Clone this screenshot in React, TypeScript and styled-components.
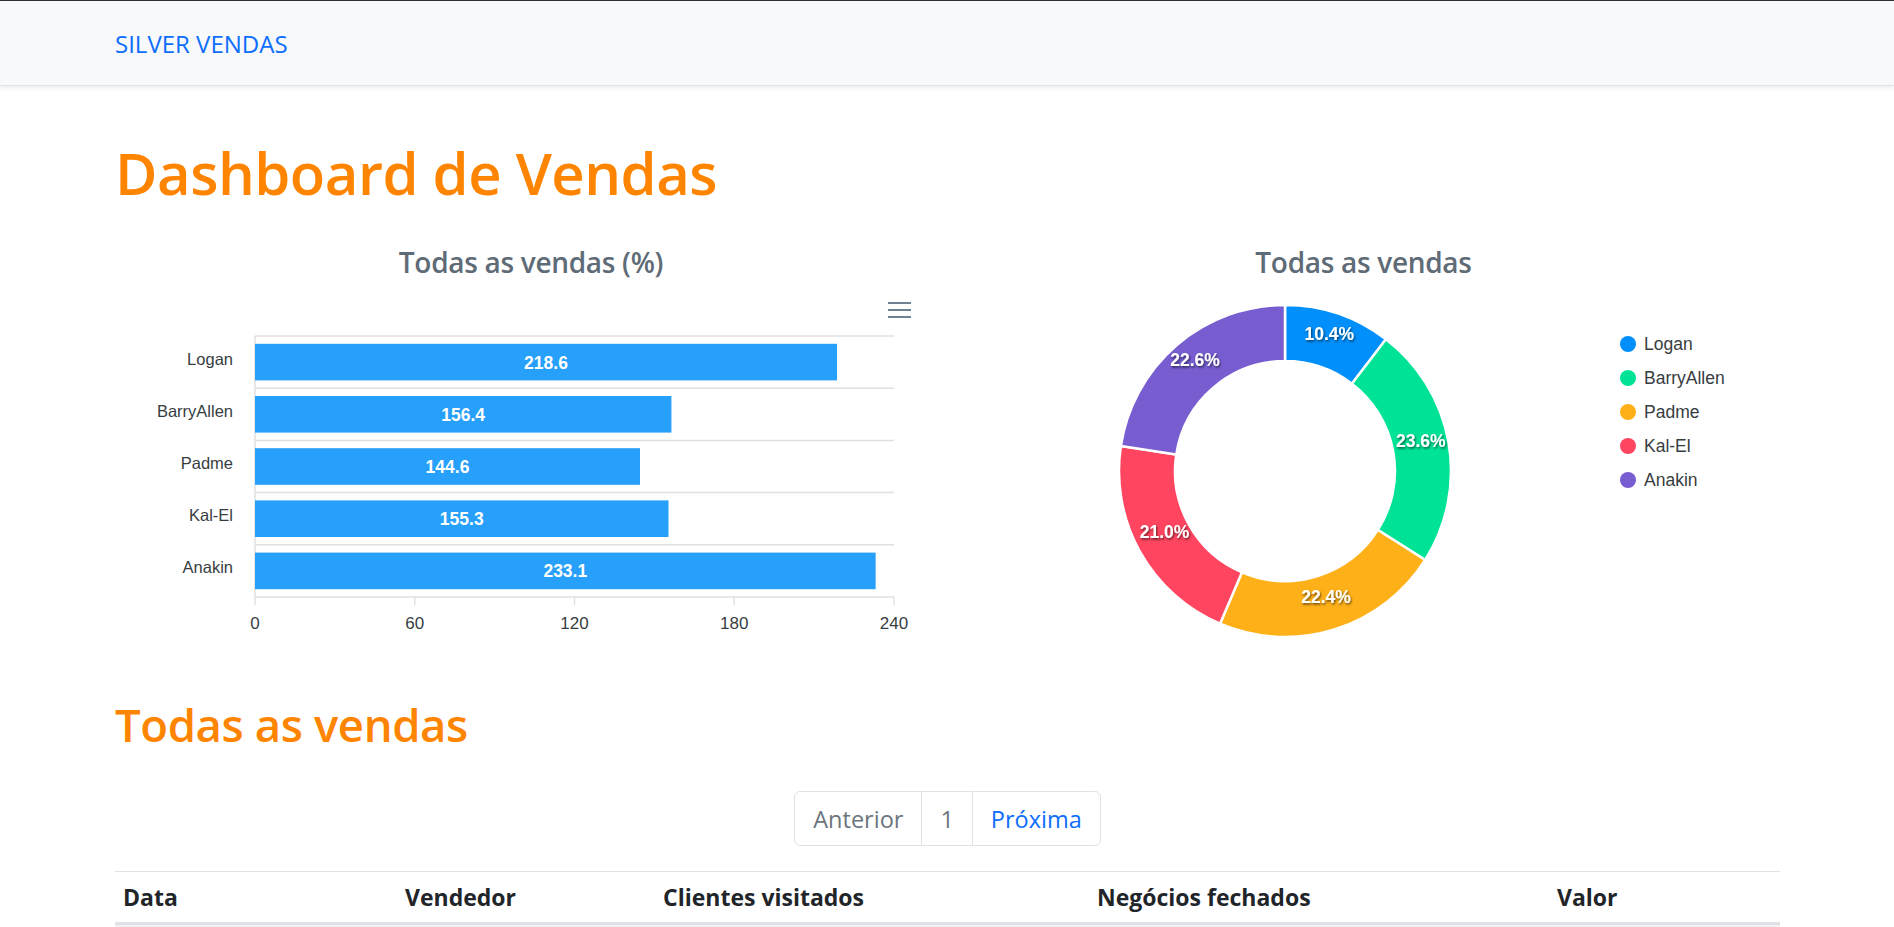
import React from "react";
import styled, { createGlobalStyle } from "styled-components";

const GlobalStyle = createGlobalStyle`
  html, body {
    margin: 0;
    padding: 0;
    overflow: hidden;
    background: #ffffff;
  }
  body {
    font-family: "Open Sans", "Noto Sans", sans-serif;
    color: #212529;
  }
`;

const NavBar = styled.nav`
  height: 84px;
  border-top: 1px solid #2b2f38;
  border-bottom: 1px solid #e1e5ea;
  background: #f8f9fa;
  box-shadow: 0 2px 5px rgba(0, 0, 0, 0.08);
  display: flex;
  align-items: center;
  padding-left: 115px;
`;

const Brand = styled.a`
  font-size: 24px;
  color: #0d6efd;
  text-decoration: none;
`;

const Main = styled.main`
  padding: 0 114px 0 115px;
`;

const PageTitle = styled.h1`
  margin: 51px 0 0;
  font-size: 58px;
  line-height: 72px;
  font-weight: 600;
  letter-spacing: -0.5px;
  color: #ff8400;
`;

const ChartsRow = styled.div`
  display: grid;
  grid-template-columns: 1fr 1fr;
  margin-top: 35px;
`;

const ChartColumn = styled.div`
  display: flex;
  flex-direction: column;
  align-items: center;
`;

const ChartTitle = styled.h3`
  margin: 0;
  font-size: 28px;
  line-height: 36px;
  font-weight: 600;
  letter-spacing: -0.3px;
  color: #5f6b77;
`;

const ChartSvg = styled.svg`
  display: block;
  align-self: flex-start;
  font-family: "Liberation Sans", Arial, sans-serif;
`;

const SectionTitle = styled.h1`
  margin: 37px 0 0;
  font-size: 45.5px;
  line-height: 55px;
  font-weight: 600;
  letter-spacing: -0.4px;
  color: #ff8400;
`;

const Pagination = styled.ul`
  display: flex;
  justify-content: center;
  list-style: none;
  margin: 39px 0 0;
  padding: 0;
`;

const PageLink = styled.li<{ $tone: "muted" | "link"; $first?: boolean; $last?: boolean }>`
  height: 53px;
  padding: 0 18px;
  display: flex;
  align-items: center;
  font-size: 23.5px;
  color: ${(p) => (p.$tone === "link" ? "#0d6efd" : "#6c757d")};
  border: 1px solid #dee2e6;
  margin-left: ${(p) => (p.$first ? "0" : "-1px")};
  border-radius: ${(p) => (p.$first ? "6px 0 0 6px" : p.$last ? "0 6px 6px 0" : "0")};
  background: #fff;
`;

const Table = styled.table`
  width: 100%;
  margin-top: 25px;
  border-collapse: collapse;
  table-layout: fixed;
`;

const Th = styled.th`
  height: 50px;
  padding: 0 8px;
  text-align: left;
  font-size: 23px;
  font-weight: 700;
  color: #212529;
  border-top: 1px solid #dee2e6;
  border-bottom: 3px solid #dee2e6;
`;

const Td = styled.td`
  height: 50px;
  padding: 0 8px;
  background: #f2f2f2;
`;

const bars = [
  { name: "Logan", value: 218.6 },
  { name: "BarryAllen", value: 156.4 },
  { name: "Padme", value: 144.6 },
  { name: "Kal-El", value: 155.3 },
  { name: "Anakin", value: 233.1 },
];

const slices = [
  { name: "Logan", pct: 10.4, color: "#008ffb" },
  { name: "BarryAllen", pct: 23.6, color: "#00e396" },
  { name: "Padme", pct: 22.4, color: "#feb019" },
  { name: "Kal-El", pct: 21.0, color: "#ff4560" },
  { name: "Anakin", pct: 22.6, color: "#775dd0" },
];

const BarChart = () => {
  const left = 140;
  const right = 779;
  const top = 56;
  const band = 52.2;
  const bottom = top + band * 5;
  const w = right - left;
  return (
    <ChartSvg width={832} height={380}>
      <g stroke="#6e8192" strokeWidth={2}>
        <line x1={773} x2={796} y1={23} y2={23} />
        <line x1={773} x2={796} y1={30} y2={30} />
        <line x1={773} x2={796} y1={37} y2={37} />
      </g>
      {[0, 1, 2, 3, 4, 5].map((i) => (
        <line key={i} x1={left} x2={right} y1={top + i * band} y2={top + i * band} stroke="#e0e0e0" strokeWidth={1.5} />
      ))}
      <line x1={left} x2={left} y1={top} y2={bottom} stroke="#e0e0e0" strokeWidth={1.5} />
      {[0, 60, 120, 180, 240].map((t) => {
        const x = left + (t / 240) * w;
        return (
          <g key={t}>
            <line x1={x} x2={x} y1={bottom} y2={bottom + 8} stroke="#e0e0e0" strokeWidth={1.5} />
            <text x={x} y={349} fontSize={17} fill="#373d3f" textAnchor="middle">
              {t}
            </text>
          </g>
        );
      })}
      {bars.map((b, i) => {
        const y = top + i * band + 7.8;
        const bw = (b.value / 240) * w;
        return (
          <g key={b.name}>
            <text x={118} y={y + 18.3 + 2.5} fontSize={16.5} fill="#373d3f" textAnchor="end">
              {b.name}
            </text>
            <rect x={left} y={y} width={bw} height={36.6} fill="#26a0fb" />
            <text x={left + bw / 2} y={y + 18.3 + 6.5} fontSize={17.5} fontWeight={700} fill="#fff" textAnchor="middle">
              {b.value.toFixed(1)}
            </text>
          </g>
        );
      })}
    </ChartSvg>
  );
};

const pt = (cx: number, cy: number, rad: number, deg: number) => {
  const a = (deg * Math.PI) / 180;
  return [cx + rad * Math.sin(a), cy - rad * Math.cos(a)];
};

const DonutChart = () => {
  const cx = 338;
  const cy = 191;
  const R = 166;
  const r = 110;
  let acc = 0;
  return (
    <ChartSvg width={833} height={380}>
      <defs>
        <filter id="label-shadow" x="-20%" y="-30%" width="140%" height="160%">
          <feDropShadow dx={1} dy={1.5} stdDeviation={1.2} floodColor="#000" floodOpacity={0.6} />
        </filter>
      </defs>
      {slices.map((s) => {
        const a0 = (acc / 100) * 360;
        acc += s.pct;
        const a1 = (acc / 100) * 360;
        const large = a1 - a0 > 180 ? 1 : 0;
        const [ox0, oy0] = pt(cx, cy, R, a0);
        const [ox1, oy1] = pt(cx, cy, R, a1);
        const [ix1, iy1] = pt(cx, cy, r, a1);
        const [ix0, iy0] = pt(cx, cy, r, a0);
        const d = `M${ox0} ${oy0} A${R} ${R} 0 ${large} 1 ${ox1} ${oy1} L${ix1} ${iy1} A${r} ${r} 0 ${large} 0 ${ix0} ${iy0} Z`;
        return <path key={s.name} d={d} fill={s.color} stroke="#fff" strokeWidth={2.5} />;
      })}
      {(() => {
        let a = 0;
        return slices.map((s) => {
          const mid = ((a + s.pct / 2) / 100) * 360;
          a += s.pct;
          const [lx, ly] = pt(cx, cy, 138, mid);
          return (
            <text
              key={s.name}
              x={lx}
              y={ly}
              fontSize={17.5}
              fontWeight={700}
              fill="#fff"
              textAnchor="middle"
              filter="url(#label-shadow)"
            >
              {s.pct.toFixed(1)}%
            </text>
          );
        });
      })()}
      {slices.map((s, i) => (
        <g key={s.name}>
          <circle cx={681} cy={64 + i * 34} r={8} fill={s.color} />
          <text x={697} y={64 + i * 34 + 6} fontSize={17.5} fill="#373d3f">
            {s.name}
          </text>
        </g>
      ))}
    </ChartSvg>
  );
};

export default function App() {
  return (
    <>
      <GlobalStyle />
      <NavBar>
        <Brand href="#">SILVER VENDAS</Brand>
      </NavBar>
      <Main>
        <PageTitle>Dashboard de Vendas</PageTitle>
        <ChartsRow>
          <ChartColumn>
            <ChartTitle>Todas as vendas (%)</ChartTitle>
            <BarChart />
          </ChartColumn>
          <ChartColumn>
            <ChartTitle>Todas as vendas</ChartTitle>
            <DonutChart />
          </ChartColumn>
        </ChartsRow>
        <SectionTitle>Todas as vendas</SectionTitle>
        <Pagination>
          <PageLink $tone="muted" $first>
            Anterior
          </PageLink>
          <PageLink $tone="muted">1</PageLink>
          <PageLink $tone="link" $last>
            Próxima
          </PageLink>
        </Pagination>
        <Table>
          <colgroup>
            <col style={{ width: 282 }} />
            <col style={{ width: 258 }} />
            <col style={{ width: 434 }} />
            <col style={{ width: 460 }} />
            <col style={{ width: 231 }} />
          </colgroup>
          <thead>
            <tr>
              <Th>Data</Th>
              <Th>Vendedor</Th>
              <Th>Clientes visitados</Th>
              <Th>Negócios fechados</Th>
              <Th>Valor</Th>
            </tr>
          </thead>
          <tbody>
            <tr>
              <Td />
              <Td />
              <Td />
              <Td />
              <Td />
            </tr>
          </tbody>
        </Table>
      </Main>
    </>
  );
}
